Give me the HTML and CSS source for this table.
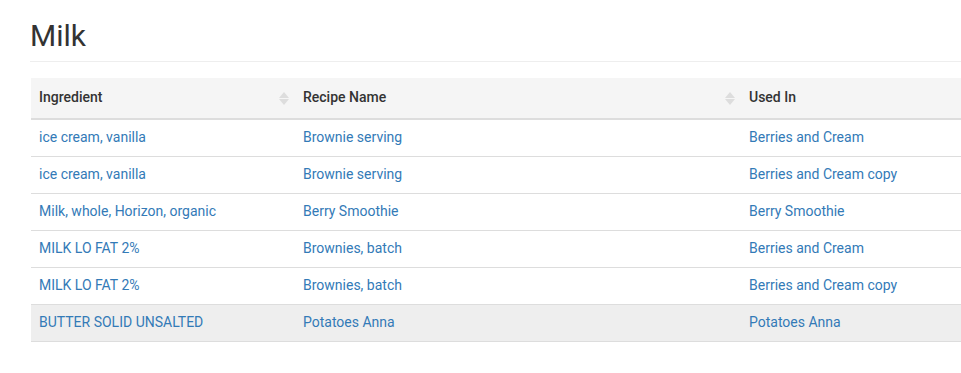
FILE: index.html
```html
<!DOCTYPE html>
<html>
<head>
<meta charset="utf-8">
<link rel="stylesheet" href="styles.css">
</head>
<body>
<div class="page">
  <h1 class="title">Milk</h1>
  <hr class="rule">
  <table class="grid">
    <colgroup>
      <col class="c1"><col class="c2"><col class="c3">
    </colgroup>
    <thead>
      <tr>
        <th><div class="th-in"><span>Ingredient</span><span class="sort"></span></div></th>
        <th><div class="th-in"><span>Recipe Name</span><span class="sort"></span></div></th>
        <th><div class="th-in"><span>Used In</span></div></th>
      </tr>
    </thead>
    <tbody>
      <tr><td><a href="#">ice cream, vanilla</a></td><td><a href="#">Brownie serving</a></td><td><a href="#">Berries and Cream</a></td></tr>
      <tr><td><a href="#">ice cream, vanilla</a></td><td><a href="#">Brownie serving</a></td><td><a href="#">Berries and Cream copy</a></td></tr>
      <tr><td><a href="#">Milk, whole, Horizon, organic</a></td><td><a href="#">Berry Smoothie</a></td><td><a href="#">Berry Smoothie</a></td></tr>
      <tr><td><a href="#">MILK LO FAT 2%</a></td><td><a href="#">Brownies, batch</a></td><td><a href="#">Berries and Cream</a></td></tr>
      <tr><td><a href="#">MILK LO FAT 2%</a></td><td><a href="#">Brownies, batch</a></td><td><a href="#">Berries and Cream copy</a></td></tr>
      <tr class="hover"><td><a href="#">BUTTER SOLID UNSALTED</a></td><td><a href="#">Potatoes Anna</a></td><td><a href="#">Potatoes Anna</a></td></tr>
    </tbody>
  </table>
</div>
</body>
</html>
```
FILE: styles.css
```css
html, body {
  margin: 0;
  padding: 0;
  background: #fff;
}
body {
  font-family: Roboto, "Liberation Sans", sans-serif;
  font-size: 14px;
  color: #333;
}
.page {
  padding-left: 30px;
}
.title {
  margin: 19px 0 0 0;
  font-size: 30px;
  font-weight: 400;
  line-height: 33px;
  color: #333;
}
.rule {
  margin: 9px 0 0 0;
  border: 0;
  border-top: 1px solid #eee;
  height: 0;
}
.grid {
  margin: 16px 0 0 1px;
  border-collapse: collapse;
  width: 930px;
  table-layout: fixed;
}
.c1 { width: 264px; }
.c2 { width: 446px; }
.c3 { width: 220px; }
.grid th {
  background: #f5f5f5;
  text-align: left;
  font-weight: 500;
  padding: 7px 8px 9px 8px;
  line-height: 24px;
  border-bottom: 2px solid #ddd;
  color: #333;
}
.th-in {
  display: flex;
  align-items: center;
  justify-content: space-between;
}
.sort {
  display: flex;
  flex-direction: column;
  align-items: center;
  gap: 1px;
  width: 10px;
  margin-right: -2px;
  margin-top: 2px;
}
.sort::before {
  content: "";
  border-left: 5px solid transparent;
  border-right: 5px solid transparent;
  border-bottom: 6px solid #ddd;
}
.sort::after {
  content: "";
  border-left: 5px solid transparent;
  border-right: 5px solid transparent;
  border-top: 6px solid #ddd;
}
.grid td {
  padding: 7px 8px 9px 8px;
  line-height: 20px;
  border-bottom: 1px solid #ddd;
}
.grid tr.hover td {
  background: #eee;
}
.grid a {
  color: #337ab7;
  text-decoration: none;
}
```
